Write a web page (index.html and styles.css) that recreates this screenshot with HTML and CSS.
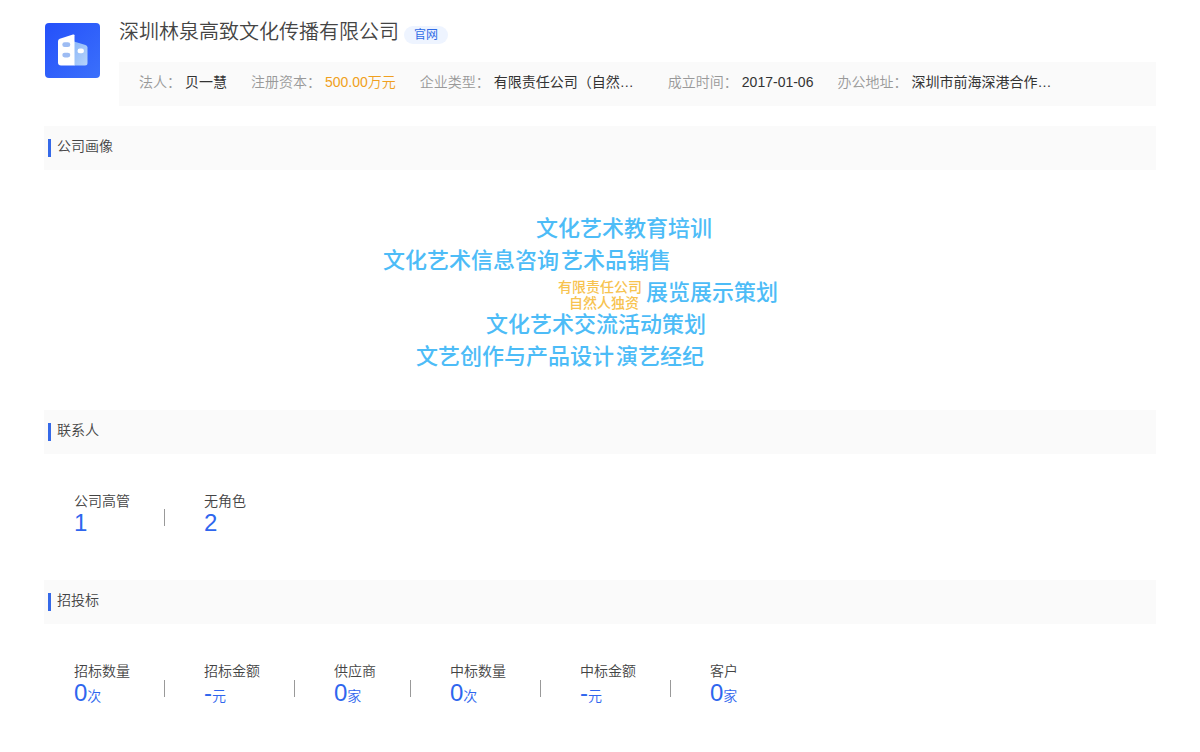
FILE: index.html
```html
<!DOCTYPE html>
<html lang="zh-CN">
<head>
<meta charset="utf-8">
<meta name="viewport" content="width=device-width, initial-scale=1">
<title>深圳林泉高致文化传播有限公司</title>
<link rel="stylesheet" href="styles.css">
</head>
<body>
<main class="page">
  <header class="company">
    <svg class="logo" viewBox="0 0 55 55" aria-hidden="true">
      <defs>
        <linearGradient id="logo-bg" x1="0" y1="0" x2="1" y2="1">
          <stop offset="0" stop-color="#2450fa"/>
          <stop offset="1" stop-color="#3b70fb"/>
        </linearGradient>
        <linearGradient id="logo-side" x1="0" y1="0" x2="1" y2="1">
          <stop offset="0" stop-color="#8db8f8"/>
          <stop offset="1" stop-color="#b5d3fb"/>
        </linearGradient>
      </defs>
      <rect width="55" height="55" rx="4" fill="url(#logo-bg)"/>
      <path d="M29 18.500L40.500 22Q42.500 22.700 42.500 24.500V40Q42.500 42.500 40 42.500H29Z" fill="url(#logo-side)"/>
      <path d="M29.500 12.300V42.500H16Q13 42.500 13 39.500V18.200Q13 16.400 14.800 15.800L28 11.600Q29.500 11.300 29.500 12.300Z" fill="#fff"/>
      <rect x="17.300" y="19.300" width="8" height="4.800" rx="2.400" fill="#9dbcf3"/>
      <rect x="17.300" y="29.700" width="8" height="4.800" rx="2.400" fill="#9dbcf3"/>
      <rect x="32.500" y="25.500" width="6.500" height="4.800" rx="2.400" fill="#fff"/>
    </svg>
    <div class="company-main">
      <div class="title-row">
        <h1 class="title">深圳林泉高致文化传播有限公司</h1>
        <a class="site-link" href="#">官网</a>
      </div>
      <dl class="facts">
        <div class="fact"><dt>法人：</dt><dd>贝一慧</dd></div>
        <div class="fact"><dt>注册资本：</dt><dd class="money">500.00万元</dd></div>
        <div class="fact"><dt>企业类型：</dt><dd class="wide">有限责任公司（自然…</dd></div>
        <div class="fact"><dt>成立时间：</dt><dd>2017-01-06</dd></div>
        <div class="fact"><dt>办公地址：</dt><dd class="wide">深圳市前海深港合作…</dd></div>
      </dl>
    </div>
  </header>

  <section>
    <h2 class="section-title">公司画像</h2>
    <div class="portrait">
      <div class="cloud">
        <span class="word w1">文化艺术教育培训</span>
        <span class="word w2">文化艺术信息咨询</span>
        <span class="word w3">艺术品销售</span>
        <span class="word small w4">有限责任公司</span>
        <span class="word small w5">自然人独资</span>
        <span class="word w6">展览展示策划</span>
        <span class="word w7">文化艺术交流活动策划</span>
        <span class="word w8">文艺创作与产品设计</span>
        <span class="word w9">演艺经纪</span>
      </div>
    </div>
  </section>

  <section>
    <h2 class="section-title">联系人</h2>
    <ul class="stats">
      <li class="stat"><span>公司高管</span><a class="value" href="#">1</a></li>
      <li class="stat"><span>无角色</span><a class="value" href="#">2</a></li>
    </ul>
  </section>

  <section>
    <h2 class="section-title">招投标</h2>
    <ul class="stats">
      <li class="stat"><span>招标数量</span><a class="value" href="#">0<small>次</small></a></li>
      <li class="stat"><span>招标金额</span><a class="value" href="#">-<small>元</small></a></li>
      <li class="stat"><span>供应商</span><a class="value" href="#">0<small>家</small></a></li>
      <li class="stat"><span>中标数量</span><a class="value" href="#">0<small>次</small></a></li>
      <li class="stat"><span>中标金额</span><a class="value" href="#">-<small>元</small></a></li>
      <li class="stat"><span>客户</span><a class="value" href="#">0<small>家</small></a></li>
    </ul>
  </section>
</main>
</body>
</html>
```

FILE: styles.css
```css
* {
  box-sizing: border-box;
}

body {
  margin: 0;
  background: #fff;
  color: #444;
  font: 350 14px/20px "Liberation Sans", "Noto Sans CJK SC", sans-serif;
}

h1, h2, dl, dd, ul {
  margin: 0;
  padding: 0;
  font-weight: 350;
}

a {
  text-decoration: none;
}

.page {
  padding: 16px 44px 0;
}

.company {
  display: flex;
  gap: 19px;
  margin-bottom: 20px;
}

.logo {
  flex: none;
  width: 55px;
  height: 55px;
  margin: 7px 0 0 1px;
}

.company-main {
  flex: 1;
  min-width: 0;
}

.title-row {
  display: flex;
  align-items: center;
  gap: 5px;
  margin-bottom: 14px;
}

.title {
  font-size: 20px;
  line-height: 32px;
}

.site-link {
  margin-top: 6px;
  padding: 0 10px;
  border-radius: 9px;
  background: #eef4ff;
  color: #2f6be6;
  font-size: 12px;
  font-weight: 400;
  line-height: 18px;
}

.facts {
  display: flex;
  gap: 24px;
  padding: 10px 20px 14px;
  background: #fafafa;
}

.fact {
  display: flex;
  gap: 4px;
  white-space: nowrap;
}

.fact dt {
  color: #999;
}

.fact dd {
  color: #333;
  font-weight: 400;
}

.fact .money {
  color: #f0a020;
  font-weight: 350;
}

.wide {
  width: 150px;
}

.section-title {
  display: flex;
  gap: 6px;
  padding: 10px 4px 13px;
  background: #fafafa;
  font-size: 14px;
  line-height: 20px;
}

.section-title::before {
  content: "";
  width: 3px;
  height: 18px;
  margin-top: 3px;
  background: #3569e8;
}

.portrait {
  display: flex;
  justify-content: center;
  padding: 43px 0 37px;
}

.cloud {
  position: relative;
  width: 440px;
  height: 160px;
}

.word {
  position: absolute;
  color: #4dbcf7;
  font-size: 22px;
  font-weight: 500;
  line-height: 32px;
  white-space: nowrap;
}

.small {
  color: #f7c350;
  font-size: 14px;
  line-height: 16px;
}

.w1 { left: 156px; top: 0; }
.w2 { left: 3px; top: 32px; }
.w3 { left: 181px; top: 32px; }
.w4 { left: 178px; top: 66px; }
.w5 { left: 189px; top: 82px; }
.w6 { left: 266px; top: 64px; }
.w7 { left: 106px; top: 96px; }
.w8 { left: 36px; top: 128px; }
.w9 { left: 236px; top: 128px; }

.stats {
  display: flex;
  padding: 37px 30px 45px;
  list-style: none;
}

.stat {
  display: flex;
  flex-direction: column;
  position: relative;
  margin-right: 74px;
}

.stat:not(:last-child)::after {
  content: "";
  position: absolute;
  right: -35px;
  bottom: 9px;
  width: 1px;
  height: 17px;
  background: #999;
}

.value {
  color: #2f66ee;
  font-size: 24px;
  line-height: 24px;
}

.value small {
  font-size: 14px;
  line-height: 20px;
}
```
